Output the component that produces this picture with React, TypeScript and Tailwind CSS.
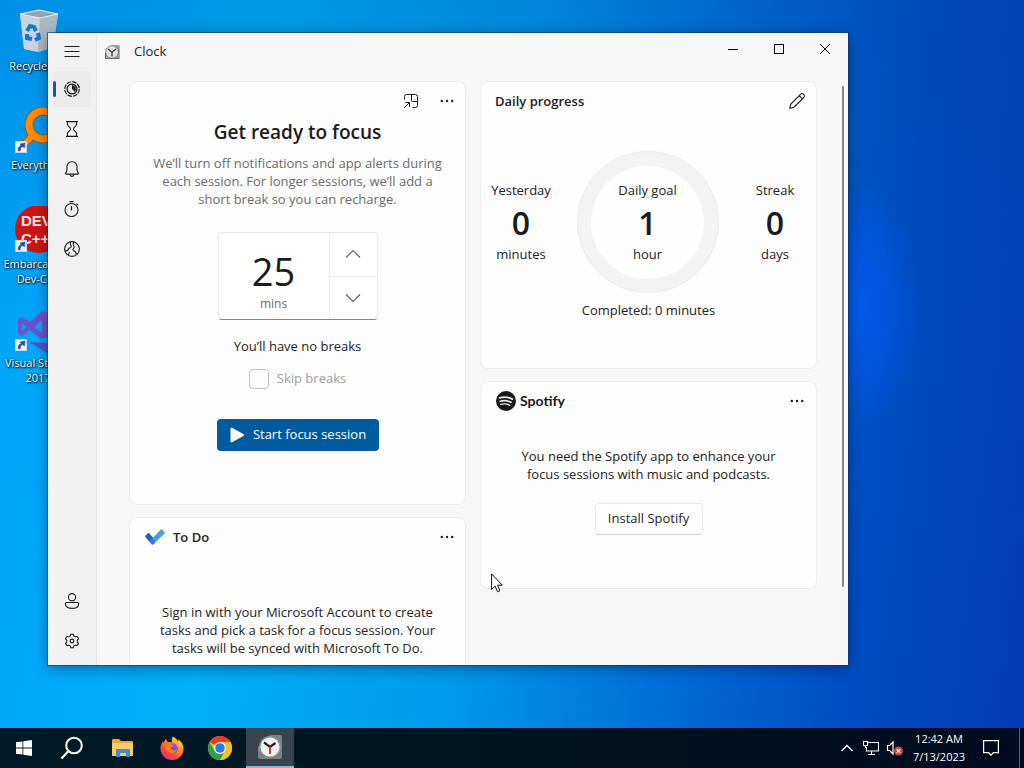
import type { ReactNode } from "react";

const ink = "stroke-[#1c1c1c] fill-none";

function ShortcutBadge() {
  return (
    <svg className="absolute bottom-0.5 left-px h-3 w-3" viewBox="0 0 12 12" aria-hidden="true">
      <rect x=".5" y=".5" width="11" height="11" fill="#f4f6fa" stroke="#c8d4e4" />
      <path d="M3.2 10C2.8 7 4 5.3 6.2 4.8L5 3l5-1-.6 5-1.5-1.6C6 6 5 7.500 5.200 9.800Z" fill="#1f4f9c" stroke="#1f4f9c" strokeWidth=".6" />
    </svg>
  );
}

function RecycleIcon() {
  return (
    <svg viewBox="0 0 48 48" className="h-12 w-12" aria-hidden="true">
      <path d="M6 6 25 2l19 4-5 33-14 5-15-3Z" fill="#b9c8d2" />
      <path d="M6 6 26 9l-2 35-14-3Z" fill="#c6d5df" />
      <path d="M26 9 44 6l-5 33-15 5Z" fill="#a9b9c4" />
      <path d="M6 6 25 2l19 4-18 4Z" fill="#8fa5b4" stroke="#e4eef4" strokeWidth="1" />
      <g fill="none" stroke="#1877cc" strokeWidth="4">
        <path d="m13 23 3-5 4 1 2 4" />
        <path d="m24 25 1 5-4 2" />
        <path d="m18 31-5-1v-4" />
      </g>
    </svg>
  );
}

function EverythingIcon() {
  return (
    <svg viewBox="0 0 48 48" className="h-12 w-12" aria-hidden="true">
      <circle cx="29" cy="18" r="14" fill="none" stroke="#a85a08" strokeWidth="9" />
      <path d="M19 28 8 40" stroke="#a85a08" strokeWidth="8" />
      <circle cx="29" cy="18" r="14" fill="none" stroke="#ff8a0c" strokeWidth="7" />
      <path d="M19 28 8 40" stroke="#ff8a0c" strokeWidth="6" />
    </svg>
  );
}

function DevIcon() {
  return (
    <svg viewBox="0 0 48 48" className="h-12 w-12" aria-hidden="true">
      <circle cx="25" cy="23" r="24" fill="#cc1616" />
      <g fontFamily="Liberation Sans, sans-serif" fontWeight="700" fontSize="15" fill="#f5e9e4">
        <text x="7" y="20">DEV</text>
        <text x="7" y="38">C++</text>
      </g>
    </svg>
  );
}

function VisualStudioIcon() {
  return (
    <svg viewBox="0 0 48 48" className="h-12 w-12" aria-hidden="true">
      <path d="M4 15v14l4 2 8-6 12 9 5-2V8l-5-2-12 11-8-5ZM8 18l5 4-5 4Zm20-3v13l-8-6Z" fill="#6e52cc" fillRule="evenodd" />
      <path d="m15 37 18 1v10Z" fill="#5a50c8" />
    </svg>
  );
}

function DesktopItem({ icon, label, shortcut }: { icon: ReactNode; label: string; shortcut?: boolean }) {
  return (
    <li className="h-[99px] w-[76px]">
      <a href="#desktop" className="flex flex-col items-center">
        <span className="relative block">
          {icon}
          {shortcut && <ShortcutBadge />}
        </span>
        <span className="mt-[2px] text-center text-[11px] leading-[15px] text-white [text-shadow:1px_1px_2px_#000,0_0_2px_#000]">
          {label}
        </span>
      </a>
    </li>
  );
}

function ClockFace({ className }: { className: string }) {
  return (
    <svg viewBox="0 0 24 24" className={className} aria-hidden="true">
      <path d="M12 0h10a2 2 0 0 1 2 2v20a2 2 0 0 1-2 2H2a2 2 0 0 1-2-2V12Z" fill="#7a8083" />
      <circle cx="12" cy="12" r="11" fill="#8b9092" />
      <circle cx="12" cy="12" r="9.500" fill="#f1f1f1" />
      <path d="m6 7.500 6 4.500 5.500-4" stroke="#222" strokeWidth="2.200" fill="none" />
      <path d="M12 12v7" stroke="#c43a32" strokeWidth="2" />
    </svg>
  );
}

function TitleClock() {
  return (
    <svg viewBox="0 0 16 16" className="h-4 w-4" aria-hidden="true">
      <path d="M8 1h6.500v14h-13V8Z" fill="#a2a2a2" />
      <circle cx="8" cy="8" r="6.300" fill="#e4e4e4" stroke="#808080" strokeWidth="1" />
      <path d="m4 5 4 3.200L12 5M8 8v4.500" stroke="#333" strokeWidth="1.300" fill="none" />
      <path d="M1.500 9v5.500H15M15 1.500V15" stroke="#666" fill="none" />
    </svg>
  );
}

const navIcons: { label: string; icon: ReactNode }[] = [
  {
    label: "Focus sessions",
    icon: (
      <svg viewBox="0 0 16 16" className={"h-4 w-4 " + ink} aria-hidden="true">
        <circle cx="8" cy="8" r="7.300" strokeWidth="1.200" strokeDasharray="4.600 1.130" />
        <circle cx="8" cy="8" r="4.900" strokeWidth="1.300" />
        <path d="M8 4a4 4 0 0 1 2.800 6.800L8 8Z" fill="#1c1c1c" stroke="none" />
      </svg>
    ),
  },
  {
    label: "Timer",
    icon: (
      <svg viewBox="0 0 16 16" className={"h-4 w-4 " + ink} aria-hidden="true">
        <path d="M2 .6h12M2 15.400h12M3.500.6v2.900c0 1.500 3.100 2.700 3.100 4.500S3.500 11 3.500 12.500v2.900M12.500.6v2.900c0 1.500-3.100 2.700-3.100 4.500s3.100 3 3.100 4.500v2.900" strokeWidth="1.100" />
      </svg>
    ),
  },
  {
    label: "Alarm",
    icon: (
      <svg viewBox="0 0 16 16" className={"h-4 w-4 " + ink} aria-hidden="true">
        <path d="M8 .7a5 5 0 0 0-5 5v3.800L1.500 12.500c0 .4.200.6.600.6h11.800c.4 0 .6-.2.600-.6L13 9.500V5.700a5 5 0 0 0-5-5ZM6 13.300c.2 2.700 3.800 2.700 4 0" strokeWidth="1.100" />
      </svg>
    ),
  },
  {
    label: "Stopwatch",
    icon: (
      <svg viewBox="0 0 16 16" className={"h-4 w-4 " + ink} aria-hidden="true">
        <circle cx="7.500" cy="9" r="6.500" strokeWidth="1.100" />
        <path d="M5.500.7h4M7.500 5v4.500M12.500 2.600l1.400 1.400" strokeWidth="1.200" />
      </svg>
    ),
  },
  {
    label: "World clock",
    icon: (
      <svg viewBox="0 0 16 16" className={"h-4 w-4 " + ink} aria-hidden="true">
        <circle cx="8" cy="8" r="7.400" strokeWidth="1.100" />
        <path
          d="M6.300.9v2c0 1.200 1.200 1.400.9 2.700S4.800 6.800 4.500 8 3.500 9.800.8 10.200M10 1c-1 1-.9 2-.7 2.900.3 1 1.200 1.400.8 2.500-.4 1.300-1.600 1.500-1 2.700s2.300.9 2.600 2.200.2 1.700 1.500 2.300M4.700 14.500c-.5-1.900.6-2.300 1-3.400"
          strokeWidth="1.100"
        />
      </svg>
    ),
  },
];

function NavButton({ label, icon, selected }: { label: string; icon: ReactNode; selected?: boolean }) {
  return (
    <button
      type="button"
      aria-label={label}
      className={
        selected
          ? "relative flex h-9 w-[38px] items-center justify-center rounded bg-[#ebebeb]"
          : "flex h-9 w-[38px] items-center justify-center rounded"
      }
    >
      {selected && <span className="absolute left-0 top-[10px] h-4 w-[3px] rounded-full bg-[#1b5a94]" />}
      {icon}
    </button>
  );
}

function MoreButton({ label }: { label: string }) {
  return (
    <button type="button" aria-label={label} className="flex h-8 w-8 items-center justify-center">
      <svg viewBox="0 0 16 16" className="h-4 w-4 fill-[#1c1c1c]" aria-hidden="true">
        <circle cx="2.800" cy="8" r="1.200" />
        <circle cx="8" cy="8" r="1.200" />
        <circle cx="13.200" cy="8" r="1.200" />
      </svg>
    </button>
  );
}

function Card({ label, className, children }: { label: string; className: string; children: ReactNode }) {
  return (
    <section aria-label={label} className={"flex flex-col rounded-lg border border-[#ededed] bg-[#fdfdfd] " + className}>
      {children}
    </section>
  );
}

function FocusCard() {
  return (
    <Card label="Focus session" className="h-[424px] items-center">
      <div className="flex w-full justify-end gap-1 pr-[2px] pt-[3px]">
        <button type="button" aria-label="Keep on top" className="flex h-8 w-8 items-center justify-center">
          <svg viewBox="0 0 16 16" className={"h-4 w-4 " + ink} aria-hidden="true">
            <path d="M1.500 6.500V3.500a2 2 0 0 1 2-2h9a2 2 0 0 1 2 2v9a2 2 0 0 1-2 2h-3M8.500 1.500v6a1 1 0 0 0 1 1h5M1 15l5-5M2.500 9.500h4v4.500" strokeWidth="1" />
          </svg>
        </button>
        <MoreButton label="Focus session options" />
      </div>
      <h2 className="mt-px text-[19px] font-semibold leading-[28px] text-[#1c1c1c]">Get ready to focus</h2>
      <p className="mt-2 w-[300px] text-center leading-[18px] text-[#6b6b6b]">
        We’ll turn off notifications and app alerts during each session. For longer sessions, we’ll add a short break so you can recharge.
      </p>
      <div className="mt-6 flex h-[88px] w-40 rounded border border-[#e9e9e9] border-b-[#868686] bg-white">
        <div className="flex flex-1 flex-col items-center justify-end pb-[7px]">
          <output className="text-[38px] leading-[44px] text-[#1b1b1b]">25</output>
          <span className="mt-[3px] text-[12px] leading-[16px] text-[#6b6b6b]">mins</span>
        </div>
        <div className="flex w-12 flex-col border-l border-[#ebebeb]">
          <button type="button" aria-label="Increase" className="flex flex-1 items-center justify-center border-b border-[#ebebeb]">
            <svg viewBox="0 0 16 16" className="h-4 w-4 fill-none stroke-[#666]" aria-hidden="true">
              <path d="m1 11.500 7-7 7 7" strokeWidth="1.200" />
            </svg>
          </button>
          <button type="button" aria-label="Decrease" className="flex flex-1 items-center justify-center">
            <svg viewBox="0 0 16 16" className="h-4 w-4 fill-none stroke-[#666]" aria-hidden="true">
              <path d="m1 4.500 7 7 7-7" strokeWidth="1.200" />
            </svg>
          </button>
        </div>
      </div>
      <p className="mt-[17px] leading-[18px]">You’ll have no breaks</p>
      <label className="mt-[14px] flex h-5 items-center gap-2 text-[#a0a0a0]">
        <input type="checkbox" disabled className="h-5 w-5 appearance-none rounded border border-[#c4c4c4] bg-[#fdfdfd]" />
        Skip breaks
      </label>
      <button type="button" className="mt-[30px] flex h-8 w-[162px] items-center justify-center gap-2 rounded bg-[#005a9e] text-white">
        <svg viewBox="0 0 16 16" className="h-4 w-4 fill-white" aria-hidden="true">
          <path d="M1.500 1.800c0-1 .8-1.400 1.600-1L14.300 7c.9.500.9 1.500 0 2L3.100 15.200c-.8.400-1.600 0-1.600-1Z" />
        </svg>
        Start focus session
      </button>
    </Card>
  );
}

function TodoCard() {
  return (
    <Card label="To Do" className="h-[280px] items-center">
      <header className="flex w-full items-center pl-[15px] pr-[2px] pt-[3px]">
        <svg viewBox="0 0 20 16" className="h-4 w-5" aria-hidden="true">
          <path d="M.3 6.800 2.900 4.200c.4-.4.800-.4 1.200 0l6.600 7.300L7.600 15c-.4.400-.8.400-1.200 0L.3 8Z" fill="#2560b4" />
          <path d="M15.800.6c.4-.4.800-.4 1.200 0l2.600 2.600c.4.400.4.800 0 1.200L8.500 15.200c-.5.500-.9.500-1.400 0l-2.600-2.700Z" fill="#4a9fe4" />
          <path d="m4.500 12.500 2.800-3 3.400 3.400-2.200 2.300c-.5.500-.9.500-1.400 0Z" fill="#2f7ed4" />
        </svg>
        <h2 className="ml-2 flex-1 font-semibold leading-[20px]">To Do</h2>
        <MoreButton label="To Do options" />
      </header>
      <p className="mt-[50px] w-[300px] text-center leading-[18px]">
        Sign in with your Microsoft Account to create tasks and pick a task for a focus session. Your tasks will be synced with Microsoft To Do.
      </p>
    </Card>
  );
}

function Stat({ title, value, unit }: { title: string; value: string; unit: string }) {
  return (
    <div className="flex flex-col items-center">
      <span className="leading-[18px]">{title}</span>
      <span className="mb-[2px] mt-[4px] text-[32px] font-semibold leading-[40px] text-[#1b1b1b]">{value}</span>
      <span className="leading-[18px]">{unit}</span>
    </div>
  );
}

function ProgressCard() {
  return (
    <Card label="Daily progress" className="h-[288px]">
      <header className="flex items-center pl-[14px] pr-[3px] pt-[3px]">
        <h2 className="flex-1 font-semibold leading-[20px]">Daily progress</h2>
        <button type="button" aria-label="Edit daily goal" className="flex h-8 w-8 items-center justify-center">
          <svg viewBox="0 0 16 16" className={"h-4 w-4 " + ink} aria-hidden="true">
            <path d="m.8 15.200 1-4.200L11.500 1.300a2 2 0 0 1 3.200 3.200L5 14.200ZM10.200 2.600l3.200 3.200" strokeWidth="1.100" />
          </svg>
        </button>
      </header>
      <div className="mt-[34px] grid grid-cols-[80px_1fr_82px] items-center">
        <Stat title="Yesterday" value="0" unit="minutes" />
        <div className="flex h-[142px] w-[142px] items-center justify-center justify-self-center rounded-full border border-[#ebebeb] bg-[#f3f3f3]">
          <div className="flex h-[113px] w-[113px] items-center justify-center rounded-full bg-[#fefefe]">
            <Stat title="Daily goal" value="1" unit="hour" />
          </div>
        </div>
        <Stat title="Streak" value="0" unit="days" />
      </div>
      <p className="mt-2 text-center leading-[18px]">Completed: 0 minutes</p>
    </Card>
  );
}

function SpotifyCard() {
  return (
    <Card label="Spotify" className="h-[208px] items-center">
      <header className="flex w-full items-center pl-[15px] pr-[3px] pt-[3px]">
        <svg viewBox="0 0 20 20" className="h-5 w-5" aria-hidden="true">
          <circle cx="10" cy="10" r="10" fill="#191919" />
          <g fill="none" stroke="#e8e8e8" strokeLinecap="round">
            <path d="M3.600 6.900c4-1.200 8.800-.8 12.700 1.200" strokeWidth="1.900" />
            <path d="M4.200 10.200c3.500-1 7.500-.6 10.900 1.100" strokeWidth="1.600" />
            <path d="M4.700 13.300c3-.8 6.300-.5 9.200 1" strokeWidth="1.300" />
          </g>
        </svg>
        <h2 className="ml-1 flex-1 font-['Lato',sans-serif] text-[14px] font-bold leading-[20px] text-[#191919]">Spotify</h2>
        <MoreButton label="Spotify options" />
      </header>
      <p className="mt-[30px] w-[280px] text-center leading-[18px]">
        You need the Spotify app to enhance your focus sessions with music and podcasts.
      </p>
      <button type="button" className="mt-5 h-8 w-[108px] rounded border border-[#e9e9e9] border-b-[#d0d0d0] bg-white">
        Install Spotify
      </button>
    </Card>
  );
}

function ClockWindow() {
  return (
    <main className="absolute left-12 top-[33px] flex h-[632px] w-[800px] overflow-hidden bg-[#f7f7f7] text-[13px] text-[#222] shadow-[0_0_0_1px_rgba(10,50,100,.6),0_3px_14px_rgba(0,0,0,.4)]">
      <nav aria-label="Clock sections" className="flex w-[49px] flex-col items-center gap-1 border-r border-[#e7e7e7] bg-[#f1f1f1] pb-[6px] pr-px">
        <button type="button" aria-label="Open navigation" className="flex h-[34px] w-[38px] items-center justify-center pt-px">
          <svg viewBox="0 0 16 16" className={"h-4 w-4 " + ink} aria-hidden="true">
            <path d="M.5 3.500h15M.5 8.500h15M.5 13.500h15" strokeWidth="1" />
          </svg>
        </button>
        {navIcons.map((item, i) => (
          <NavButton key={item.label} label={item.label} icon={item.icon} selected={i === 0} />
        ))}
        <div className="flex-1" />
        <NavButton
          label="Sign in"
          icon={
            <svg viewBox="0 0 16 16" className={"h-4 w-4 " + ink} aria-hidden="true">
              <circle cx="8" cy="4.200" r="3.600" strokeWidth="1.100" />
              <path d="M2.500 9.500h11c.7 0 1.200.5 1.200 1.200 0 3-3 4.700-6.700 4.700s-6.700-1.700-6.700-4.700c0-.7.500-1.200 1.200-1.200Z" strokeWidth="1.100" />
            </svg>
          }
        />
        <NavButton
          label="Settings"
          icon={
            <svg viewBox="0 0 16 16" className={"h-4 w-4 " + ink} aria-hidden="true">
              <circle cx="8" cy="8" r="1.900" strokeWidth="1.100" />
              <path d="M6.700 1.200h2.600l.5 1.900 1.300.8 1.900-.6 1.500 2.300-1.200 1.500v1.800l1.200 1.500-1.500 2.300-1.900-.6-1.300.8-.5 1.900H6.700l-.5-1.900-1.300-.8-1.900.6-1.500-2.300 1.200-1.500V7.100L1.500 5.600 3 3.300l1.900.6 1.300-.8Z" strokeWidth="1.100" strokeLinejoin="round" />
            </svg>
          }
        />
      </nav>
      <div className="relative flex min-w-0 flex-1 flex-col">
        <header className="flex h-12 items-start">
          <div className="flex h-[37px] flex-1 items-center gap-[14px] pl-[7px]">
            <TitleClock />
            <h1 className="text-[13px]">Clock</h1>
          </div>
          <button type="button" aria-label="Minimize" className="flex h-8 w-[46px] items-center justify-center">
            <svg viewBox="0 0 12 12" className="h-3 w-3 stroke-black" aria-hidden="true"><path d="M1 6.500h10" /></svg>
          </button>
          <button type="button" aria-label="Maximize" className="flex h-8 w-[46px] items-center justify-center">
            <svg viewBox="0 0 12 12" className="h-3 w-3 fill-none stroke-black" aria-hidden="true"><rect x="1.500" y="1.500" width="9" height="9" /></svg>
          </button>
          <button type="button" aria-label="Close" className="flex h-8 w-[46px] items-center justify-center">
            <svg viewBox="0 0 12 12" className="h-3 w-3 stroke-black" aria-hidden="true"><path d="m1 1 10 10M11 1 1 11" /></svg>
          </button>
        </header>
        <div className="grid min-h-0 flex-1 grid-cols-2 gap-[14px] overflow-hidden pl-8 pr-[31px]">
          <div className="flex flex-col gap-3">
            <FocusCard />
            <TodoCard />
          </div>
          <div className="flex flex-col gap-3">
            <ProgressCard />
            <SpotifyCard />
          </div>
        </div>
        <span className="absolute right-1 top-[53px] h-[501px] w-[2px] rounded-full bg-[#868686]" />
      </div>
    </main>
  );
}

function Taskbar() {
  return (
    <footer className="flex h-10 items-stretch bg-[linear-gradient(90deg,#001a28,#001420_50%,#000a20)] text-white">
      <button type="button" aria-label="Start" className="flex w-12 items-center justify-center">
        <svg viewBox="0 0 16 16" className="h-4 w-4 fill-white" aria-hidden="true">
          <path d="M0 2.300 6.500 1.400v6.200H0ZM7.300 1.300 16 0v7.600H7.300ZM0 8.400h6.500v6.200L0 13.700ZM7.300 8.400H16V16l-8.700-1.300Z" />
        </svg>
      </button>
      <button type="button" aria-label="Search" className="flex w-12 items-center justify-center">
        <svg viewBox="0 0 24 24" className="h-6 w-6 fill-none stroke-white" aria-hidden="true">
          <circle cx="14" cy="9.500" r="7.800" strokeWidth="2" />
          <path d="M8.500 15 1.500 22.500" strokeWidth="2.200" />
        </svg>
      </button>
      <button type="button" aria-label="File Explorer" className="flex w-[54px] items-center justify-center">
        <svg viewBox="0 0 24 20" className="h-5 w-6" aria-hidden="true">
          <path d="M1 2.500C1 1.700 1.500 1 2.300 1H8l2 2h11c.6 0 1 .4 1 1v14H1Z" fill="#e5ad35" />
          <path d="M1 5h21v13H1Z" fill="#f4cc68" />
          <path d="M5 19v-7c0-.6.400-1 1-1h12c.6 0 1 .4 1 1v7h-4v-4H9v4Z" fill="#3d8ec8" />
        </svg>
      </button>
      <button type="button" aria-label="Firefox" className="flex w-[44px] items-center justify-center">
        <svg viewBox="0 0 24 24" className="h-6 w-6" aria-hidden="true">
          <defs>
            <linearGradient id="fox" x1=".85" y1="0" x2=".15" y2="1">
              <stop offset="0" stopColor="#fff04a" />
              <stop offset=".35" stopColor="#ff9a1f" />
              <stop offset=".7" stopColor="#ff4540" />
              <stop offset="1" stopColor="#e9257e" />
            </linearGradient>
            <linearGradient id="globe" x1=".6" y1="0" x2=".4" y2="1">
              <stop offset="0" stopColor="#b552ee" />
              <stop offset="1" stopColor="#5a3fc0" />
            </linearGradient>
          </defs>
          <path d="M13 .5c3 1.500 4.300 3.300 4.900 5 .5-.5.500-1.300.2-2.200C21.500 5.500 23.500 9 23.500 12.500A11.300 11.300 0 0 1 12 24 11.400 11.400 0 0 1 .5 12.500C.5 9.500 1.500 7.200 3 5c.1 1 .3 1.500.6 2C4 5.500 5 4 6.300 3c.2 1.500.8 2.500 1.800 3.200C9.500 5.800 11 6 12 6.500 11.500 4.500 11.800 2 13 .5Z" fill="url(#fox)" />
          <circle cx="12.500" cy="12.200" r="5.300" fill="url(#globe)" />
          <path d="M4.500 8c2-1.500 4.800-1.200 6.500.5 1.300 0 2.300.8 2.300 1.500-2 .6-2.500 1-2.600 2 .5 2.500 4.300 3 6.300 1-1 3.800-4.500 5.300-7.500 4C6 15.500 5 12 6 10Z" fill="#ff7a25" />
        </svg>
      </button>
      <button type="button" aria-label="Chrome" className="flex w-[52px] items-center justify-center">
        <svg viewBox="0 0 24 24" className="h-6 w-6" aria-hidden="true">
          <circle cx="12" cy="12" r="12" fill="#fbc116" />
          <path d="M12 12 1.600 6A12 12 0 0 1 22.400 6H12Z" fill="#e33b2e" />
          <path d="M1.600 6A12 12 0 0 0 12 24l5.200-9L12 12 6.800 15Z" fill="#2ba24c" />
          <path d="M22.400 6A12 12 0 0 1 12 24l5.200-9V9L12 6Z" fill="#fbc116" />
          <circle cx="12" cy="12" r="6" fill="#fff" />
          <circle cx="12" cy="12" r="4.800" fill="#2c7be5" />
        </svg>
      </button>
      <button type="button" aria-label="Clock" className="flex w-12 items-center justify-center border-b-2 border-[#76b9ed] bg-[#39454e]">
        <ClockFace className="h-6 w-6" />
      </button>
      <div className="flex-1" />
      <button type="button" aria-label="Show hidden icons" className="flex w-6 items-center justify-center">
        <svg viewBox="0 0 12 12" className="h-3 w-3 fill-none stroke-white" aria-hidden="true"><path d="m.5 9 5.500-5.500L11.500 9" strokeWidth="1.300" /></svg>
      </button>
      <button type="button" aria-label="Network" className="flex w-6 items-center justify-center">
        <svg viewBox="0 0 16 16" className="h-4 w-4 fill-none stroke-white" aria-hidden="true">
          <path d="M5 2.500h10.500v8.500H3.500V7M8.500 11v3M5 14.500h7M.5 1.500h4v4h-4ZM2.500 5.500V8" strokeWidth="1.100" />
        </svg>
      </button>
      <button type="button" aria-label="Volume muted" className="flex w-6 items-center justify-center">
        <svg viewBox="0 0 18 16" className="h-4 w-[18px]" aria-hidden="true">
          <path d="M1.500 5.500h2.200L7 2v12l-3.300-3.500H1.500Z" fill="none" stroke="#fff" strokeWidth="1.200" />
          <circle cx="12.500" cy="11" r="4.500" fill="#c8484a" />
          <path d="m10.700 9.200 3.600 3.600M14.300 9.200l-3.600 3.600" stroke="#fff" strokeWidth="1.200" />
        </svg>
      </button>
      <div className="flex w-16 flex-col items-center justify-center text-[11px] leading-[18px]">
        <time>12:42 AM</time>
        <time>7/13/2023</time>
      </div>
      <button type="button" aria-label="Notifications" className="flex w-10 items-center justify-center">
        <svg viewBox="0 0 16 16" className="h-4 w-4 fill-none stroke-white" aria-hidden="true">
          <path d="M.6.600h14.800v12h-4.900L8 15.200l-2.500-2.600H.6Z" strokeWidth="1.200" />
        </svg>
      </button>
      <span className="ml-2 w-[5px] border-l border-[#59616f]" />
    </footer>
  );
}

export default function App() {
  return (
    <div className="flex min-h-screen flex-col bg-[#0078e0] font-['Open_Sans','Noto_Sans',sans-serif]">
      <div className="relative flex-1 overflow-hidden bg-[radial-gradient(ellipse_60px_130px_at_84%_42%,rgba(0,95,250,.75),transparent),linear-gradient(180deg,rgba(0,60,150,.2),transparent_50%),linear-gradient(97deg,#00a4fc_0%,#00b0f8_25%,#009aec_48%,#0070d8_66%,#004cc4_84%,#003cb6_100%)]">
        <ul className="flex flex-col pt-2">
          <DesktopItem icon={<RecycleIcon />} label="Recycle Bin" />
          <DesktopItem icon={<EverythingIcon />} label="Everything" shortcut />
          <DesktopItem icon={<DevIcon />} label="Embarcadero Dev-C++" shortcut />
          <DesktopItem icon={<VisualStudioIcon />} label="Visual Studio 2017" shortcut />
        </ul>
        <ClockWindow />
        <svg viewBox="0 0 12 20" className="absolute left-[491px] top-[573px] h-5 w-3" aria-hidden="true">
          <path d="M.6.900v15.500l3.500-3.300 2.400 5.600 2.400-1-2.400-5.500h4.800Z" fill="#fff" stroke="#111" strokeWidth="1" />
        </svg>
      </div>
      <Taskbar />
    </div>
  );
}
